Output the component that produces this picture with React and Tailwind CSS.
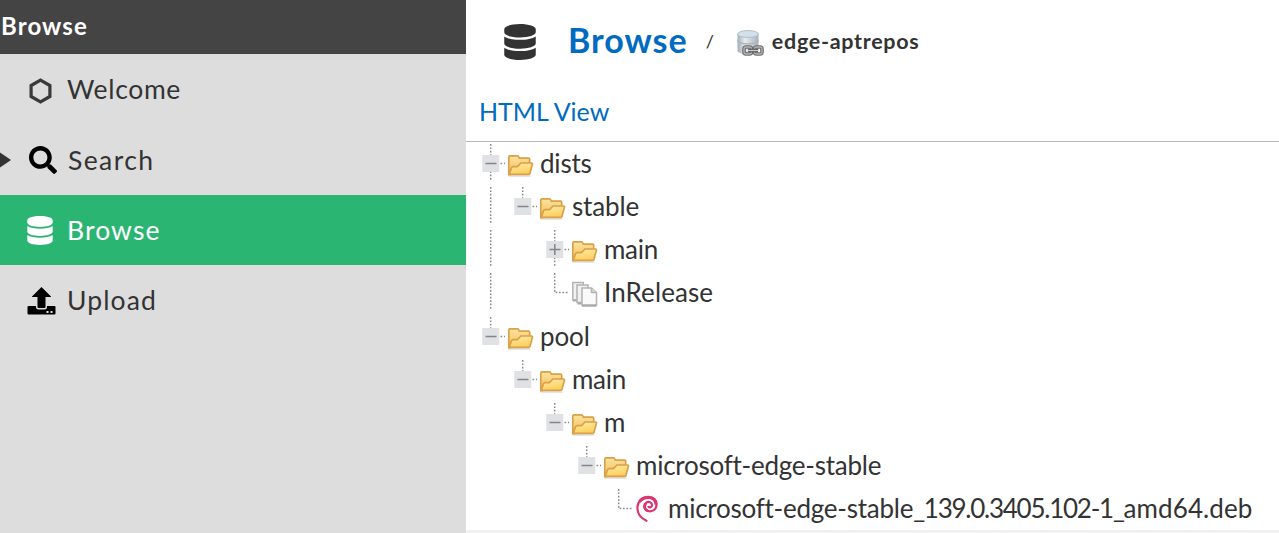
import { FaDatabase, FaSearch } from "react-icons/fa";

const LINE = "#8a8a8a";

function Hexagon() {
  return (
    <svg className="mt-[2px] h-[26px] w-[24px]" viewBox="0 0 24 26">
      <path d="M12.500 2.200 21.900 7.500V18.500L12.500 23.800 3.100 18.500V7.500Z" fill="none" stroke="#3a3a3a" strokeWidth="3.200" />
    </svg>
  );
}

function UploadIcon() {
  return (
    <svg className="h-[30px] w-[29px]" viewBox="0 0 29 30">
      <path d="M14.500 1 24 10.500V11H18.500V21a1 1 0 0 1-1 1h-6a1 1 0 0 1-1-1V11H5v-.5Z" fill="#000" />
      <path d="M1.500 20H9v1.200A2.300 2.300 0 0 0 11.300 23.500h6.400A2.300 2.300 0 0 0 20 21.200V20h7.500a1 1 0 0 1 1 1v6.500a1 1 0 0 1-1 1h-26a1 1 0 0 1-1-1V21a1 1 0 0 1 1-1Z" fill="#000" />
      <path d="M19.500 25h2v2h-2zM23.500 25h2v2h-2z" fill="#ddd" />
    </svg>
  );
}

function RepoIcon() {
  return (
    <svg className="h-[28px] w-[28px]" viewBox="0 0 28 28">
      <defs>
        <linearGradient id="drum" x1="0" x2="1">
          <stop offset="0" stopColor="#a3adb5" />
          <stop offset=".35" stopColor="#e6ecf0" />
          <stop offset="1" stopColor="#a9b3bb" />
        </linearGradient>
      </defs>
      <path d="M1.500 5v16.500c0 5 21 5 21 0V5Z" fill="url(#drum)" />
      <ellipse cx="12" cy="5" rx="10.500" ry="3.400" fill="#d3e0ea" stroke="#b4bfc8" />
      <path d="M1.500 11.500c2 4.500 19 4.500 21 0" fill="none" stroke="#a8b3bb" strokeWidth="1.300" />
      <g fill="none">
        <rect x="8" y="18" width="7.500" height="7" rx="2" stroke="#6c6c6c" strokeWidth="3.600" />
        <rect x="18.500" y="18" width="7.500" height="7" rx="2" stroke="#6c6c6c" strokeWidth="3.600" />
        <rect x="8" y="18" width="7.500" height="7" rx="2" stroke="#b4b4b4" strokeWidth="1.300" />
        <rect x="18.500" y="18" width="7.500" height="7" rx="2" stroke="#b4b4b4" strokeWidth="1.300" />
        <path d="M12 21.500h10" stroke="#555" strokeWidth="3.500" />
        <path d="M12 21.500h10" stroke="#ccc" strokeWidth="1.300" />
      </g>
    </svg>
  );
}

function Folder() {
  return (
    <svg className="h-[36px] w-8 shrink-0" viewBox="0 0 32 36">
      <defs>
        <linearGradient id="back" x1="0" y1="0" x2="0" y2="1">
          <stop offset="0" stopColor="#fbe3a0" />
          <stop offset="1" stopColor="#f2bd55" />
        </linearGradient>
        <linearGradient id="front" x1="0" y1="0" x2=".3" y2="1">
          <stop offset="0" stopColor="#ffeeae" />
          <stop offset="1" stopColor="#fccf5c" />
        </linearGradient>
      </defs>
      <path d="M2.500 32h22" stroke="#dcdcdc" strokeWidth="1.500" />
      <path d="M2.800 30.500V13q0-1.200 1.200-1.200h7.500q1 0 1.300 1l.5 1.300H22.500q1.200 0 1.200 1.200V28.500Z" fill="url(#back)" stroke="#dba04a" strokeWidth="1.700" />
      <path d="M3.300 30.300 5.500 23.800q.4-1.200 1.600-1.200h4.400l3.400-3.600H25.500q1.200 0 .9 1.200l-2.400 9q-.3 1.100-1.400 1.100Z" fill="url(#front)" stroke="#dba04a" strokeWidth="1.700" />
    </svg>
  );
}

function Pages() {
  return (
    <svg className="h-[36px] w-8 shrink-0" viewBox="0 0 32 36">
      <g stroke="#b3b3b3" strokeWidth="1.500" fill="#f1f1f1">
        <path d="M2.800 9.500h10.500v17.500H2.800z" />
        <path d="M7 12h11v17.500H7z" />
        <path d="M12 15h9.500l5 4.500v12.500H12z" fill="#fafafa" />
        <path d="M21.500 15V19.500h5" fill="#ddd" />
      </g>
      <path d="M3 27.500h3.500M7.500 30.500h4M12 32.800h14.500" stroke="#aaa" strokeWidth="2" />
    </svg>
  );
}

function Debian() {
  return (
    <svg className="h-[36px] w-8 shrink-0" viewBox="0 0 32 36">
      <g fill="none" stroke="#d8376f" strokeLinecap="round">
        <path d="M12.500 31.800C6.500 29 3 24 3.500 18C4 11.500 9.500 7.800 14.500 8.200C20 8.700 22.800 12 22.500 16.500C22 21 17.500 23.300 13.800 22C9.800 20.800 9.200 16 12 13.900C14.600 12 18.200 13.300 18 16.400C17.800 18.300 15.500 19 14.500 17.800" strokeWidth="2.200" />
        <path d="M6 12C9 8.800 12 8.200 15.500 8.500C19 9 21.500 11.500 21.900 14.500" strokeWidth="3.200" />
        <path d="M11.500 15C10 17.500 10.700 20.500 13.500 21.700" strokeWidth="2.600" />
      </g>
    </svg>
  );
}

function Branch({ kind }) {
  const down = kind === "plus" || kind === "minus";
  return (
    <svg className="h-[36px] w-8 shrink-0" viewBox="0 0 32 36">
      <g stroke={LINE} strokeWidth="1.500" strokeDasharray="1.700 1.700" fill="none">
        {(kind === "line" || down) && <path d="M16.700 0V36" />}
        {kind === "minusEnd" && <path d="M16.700 0V12" />}
        {kind === "elbow" && <path d="M16.700 0V19.500H30" />}
        {(down || kind === "minusEnd") && <path d="M26.500 19.500H31" />}
      </g>
      {(down || kind === "minusEnd") && (
        <>
          <path d="M8.300 11h17v17h-17z" fill="#dfe1e5" />
          <path d="M11.500 19.500h11" stroke="#858585" strokeWidth="1.500" />
        </>
      )}
      {kind === "plus" && <path d="M16.800 14v11" stroke="#858585" strokeWidth="1.500" />}
    </svg>
  );
}

const ROWS = [
  { cells: ["minus"], icon: Folder, label: "dists", track: "tracking-[-0.2px]" },
  { cells: ["line", "minusEnd"], icon: Folder, label: "stable", track: "tracking-[-0.15px]" },
  { cells: ["line", "", "plus"], icon: Folder, label: "main", track: "tracking-[-0.3px]" },
  { cells: ["line", "", "elbow"], icon: Pages, label: "InRelease", track: "tracking-[0.1px]" },
  { cells: ["minusEnd"], icon: Folder, label: "pool", track: "tracking-[-0.1px]" },
  { cells: ["", "minusEnd"], icon: Folder, label: "main", track: "tracking-[-0.3px]" },
  { cells: ["", "", "minusEnd"], icon: Folder, label: "m", track: "tracking-[0px]" },
  { cells: ["", "", "", "minusEnd"], icon: Folder, label: "microsoft-edge-stable", track: "tracking-[-0.25px]" },
  {
    cells: ["", "", "", "", "elbow"],
    icon: Debian,
    label: (
      <>
        microsoft-edge-stable<span className="tracking-[-1.25px]">_139.0.3405.102-1_</span>
        <span className="tracking-[0.1px]">amd64.deb</span>
      </>
    ),
    track: "tracking-[-0.25px]",
  },
];

function Sidebar() {
  return (
    <aside className="flex w-[466px] shrink-0 flex-col bg-[#ddd] text-[26.500px] text-[#333]">
      <h2 className="h-[54px] bg-[#444] pl-px text-[24px] leading-[52px] font-bold tracking-[1.1px] text-white">Browse</h2>
      <nav className="flex flex-col">
        <a className="flex h-[71px] items-center pl-[28px]">
          <Hexagon />
          <span className="ml-[15px] tracking-[0.65px]">Welcome</span>
        </a>
        <a className="flex h-[70px] items-center">
          <svg className="h-[18px] w-[11px]" viewBox="0 0 11 18"><path d="M0 1.500 11 9 0 16.500Z" fill="#333" /></svg>
          <FaSearch className="ml-[18px] size-[28px] text-black" />
          <span className="ml-[11px] pt-px tracking-[1.4px]">Search</span>
        </a>
        <a className="flex h-[70px] items-center bg-[#2ab573] pl-[27px] text-white">
          <FaDatabase className="h-[29px] w-[26px]" />
          <span className="ml-[14px] pt-px tracking-[1.1px]">Browse</span>
        </a>
        <a className="flex h-[71px] items-center pl-[27px]">
          <UploadIcon />
          <span className="ml-[11px] pt-px tracking-[1.1px]">Upload</span>
        </a>
      </nav>
    </aside>
  );
}

export default function App() {
  return (
    <div className="flex h-[533px] w-[1279px] overflow-hidden bg-white font-['Lato',sans-serif] text-[#333]">
      <Sidebar />
      <main className="flex min-w-0 flex-1 flex-col">
        <header className="flex h-[83px] items-center pl-[37px]">
          <FaDatabase className="h-[36px] w-[34px]" />
          <h1 className="ml-[31px] pb-[3px] text-[34px] leading-[40px] font-bold tracking-[1px] text-[#006bbf]">Browse</h1>
          <span className="ml-[18px] text-[18px]">/</span>
          <span className="mt-[2px] ml-[22px]"><RepoIcon /></span>
          <span className="ml-[8px] text-[21.500px] font-bold tracking-[0.700px]">edge-aptrepos</span>
        </header>
        <div className="flex h-[59px] items-center border-b border-[#b8b8b8] pl-[13px] text-[25px] text-[#006bbf]">HTML View</div>
        <ul className="flex h-[388px] flex-col pt-[2px] pl-[8px] text-[26px]">
          {ROWS.map((row, i) => (
            <li key={i} className="flex h-[43.150px] shrink-0 items-start">
              {row.cells.map((kind, j) => <Branch key={j} kind={kind} />)}
              <row.icon />
              <span className={`ml-[2px] leading-[38px] whitespace-nowrap ${row.track}`}>{row.label}</span>
            </li>
          ))}
        </ul>
        <div className="h-[3px] shrink-0 bg-[#f1f1f1]" />
      </main>
    </div>
  );
}
